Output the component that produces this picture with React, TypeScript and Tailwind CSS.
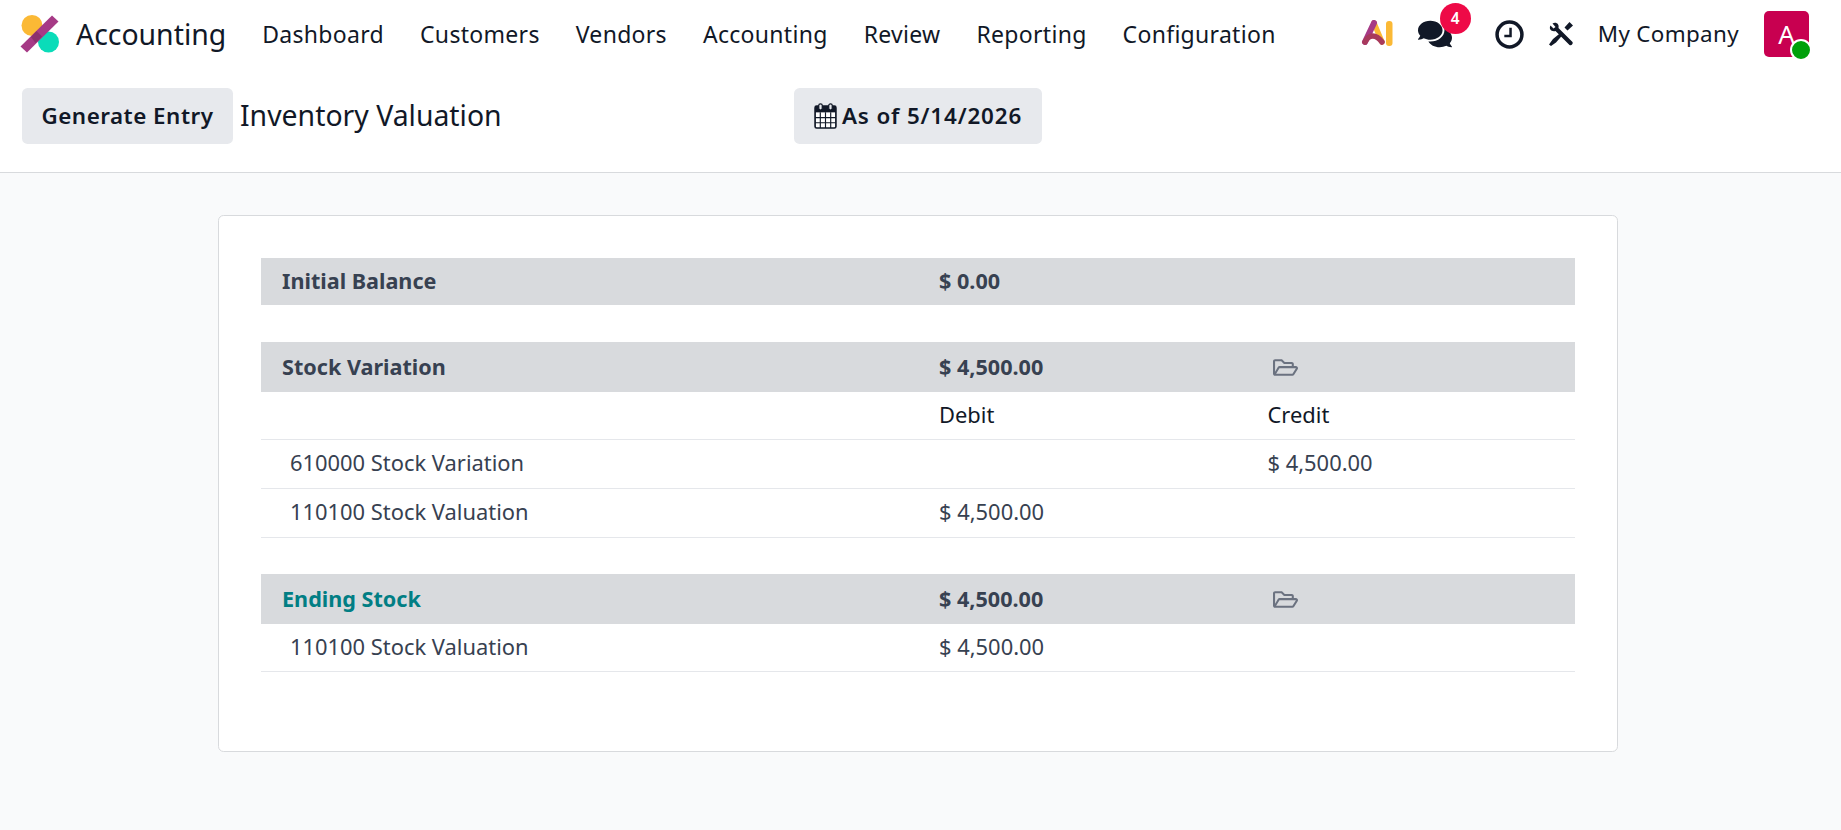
import { FaComments, FaRegFolderOpen } from "react-icons/fa";

const menuItems = ["Dashboard", "Customers", "Vendors", "Accounting", "Review", "Reporting", "Configuration"];

const AppLogo = () => (
  <svg width="40" height="40" viewBox="0 0 40 40" className="shrink-0">
    <circle cx="12" cy="11.5" r="10.5" fill="#fbb935" />
    <circle cx="28.5" cy="28" r="10.5" fill="#0adcb9" />
    <path d="M32 1.5 L38.5 7.5 L7 38.5 L0.5 32.5 Z" fill="#a63a86" />
    <path d="M16.5 17 L22 22.5 L15.5 29 L11 23 Z" fill="#7a2a5e" opacity="0.6" />
  </svg>
);

const AiIcon = () => (
  <svg width="32" height="28" viewBox="0 0 32 28">
    <path d="M13 3 L21 22" stroke="#fbb935" strokeWidth="5.5" strokeLinecap="round" />
    <path d="M13 3 L4 22" stroke="#a63a86" strokeWidth="6" strokeLinecap="round" />
    <path d="M4 22 C8 14 15 14 21 22" fill="none" stroke="#a83a5c" strokeWidth="5.5" strokeLinecap="round" />
    <rect x="25" y="1" width="6.5" height="25" rx="3" fill="#fbb935" />
  </svg>
);

const ClockIcon = () => (
  <svg width="29" height="29" viewBox="0 0 28 28">
    <circle cx="14" cy="14" r="12" fill="none" stroke="#111827" strokeWidth="3.4" />
    <path d="M15 7.5 V15.5 H9" fill="none" stroke="#111827" strokeWidth="2.4" />
  </svg>
);

const ToolsIcon = () => (
  <svg width="26" height="26" viewBox="0 0 26 26">
    <path d="M2.5 4.5 L5.5 7.5 L7.5 6 L4.5 2.5 C8 0.5 11.5 3 10.5 7 L24.5 21 C25.5 22.5 23.5 25 21.5 24 L7.5 10 C3.5 11 0.5 8 2.5 4.5 Z" fill="#111827" />
    <path d="M21.5 1 L25 4.5 L19.5 9.5 L16.5 6.5 Z M13 11.5 L15 13.5 L8 21.5 L3 25 L1 23.5 L5 18 Z" fill="#111827" />
  </svg>
);

const CalendarIcon = () => (
  <svg width="23" height="26" viewBox="0 0 22 25" className="shrink-0">
    <rect x="1" y="3" width="20" height="21" rx="1.5" fill="#fff" stroke="#111827" strokeWidth="1.6" />
    <rect x="1" y="3" width="20" height="6" fill="#111827" />
    <rect x="4.5" y="0.8" width="3.4" height="6" rx="1.7" fill="#e7e9ed" stroke="#111827" strokeWidth="1.2" />
    <rect x="14.1" y="0.8" width="3.4" height="6" rx="1.7" fill="#e7e9ed" stroke="#111827" strokeWidth="1.2" />
    <path d="M6 9 V24 M11 9 V24 M16 9 V24 M1 14 H21 M1 19 H21" stroke="#111827" strokeWidth="1.1" />
  </svg>
);

const SectionRow = ({ label, amount, folder, teal }: { label: string; amount: string; folder?: boolean; teal?: boolean }) => (
  <div className={`grid grid-cols-[2fr_1fr_1fr] items-center bg-[#d8dadd] text-[21.6px] font-bold text-[#374151] ${folder ? "h-[50px]" : "h-[47px]"}`}>
    <div className={`pl-[21px] ${teal ? "text-[#017e84]" : ""}`}>{label}</div>
    <div className="pl-[21px]">{amount}</div>
    <div className="pl-[26px]">{folder && <FaRegFolderOpen size={25} className="text-[#6b7280]" />}</div>
  </div>
);

const LineRow = ({ label, debit, credit, dark, height = "h-[49px]" }: { label?: string; debit?: string; credit?: string; dark?: boolean; height?: string }) => (
  <div className={`grid grid-cols-[2fr_1fr_1fr] items-center border-b border-[#e5e7eb] pb-[1px] text-[21.9px] ${height} ${dark ? "text-[#111827]" : "text-[#374151]"}`}>
    <div className="pl-[29px]">{label}</div>
    <div className="pl-[21px]">{debit}</div>
    <div className="pl-[21px]">{credit}</div>
  </div>
);

export default function App() {
  return (
    <div className="flex min-h-[830px] flex-col bg-[#f9fafb] font-['Noto_Sans',sans-serif] text-[22.4px] text-[#111827]">
      <div className="bg-white">
        {/* top bar */}
        <nav className="flex h-[68px] items-center pl-[20px] pr-[32px]">
          <AppLogo />
          <span className="ml-[16px] text-[28.4px]">Accounting</span>
          <div className="ml-[36px] flex gap-[36px] text-[23px]">
            {menuItems.map((item) => (
              <span key={item} className="tracking-[0.3px]">{item}</span>
            ))}
          </div>
          <div className="ml-auto flex items-center">
            <AiIcon />
            <div className="relative ml-[25px] mr-[43px]">
              <FaComments size={34} />
              <span className="absolute left-[22px] top-[-14px] flex h-[31px] w-[31px] items-center justify-center rounded-full bg-[#ee0a47] text-[15.4px] font-semibold text-white">4</span>
            </div>
            <ClockIcon />
            <div className="ml-[24px]">
              <ToolsIcon />
            </div>
            <span className="ml-[24px] tracking-[0.35px]">My Company</span>
            <div className="relative ml-[25px] flex h-[46px] w-[45px] items-center justify-center rounded-[5px] bg-[#c80050] text-[26px] text-white">
              A
              <span className="absolute bottom-[-4px] right-[-3px] h-[22px] w-[22px] rounded-full border-2 border-white bg-[#00a00a]" />
            </div>
          </div>
        </nav>
        {/* control panel */}
        <div className="flex h-[105px] border-b border-[#d8dadd] pl-[22px] pt-[20px]">
          <button className="h-[56px] w-[211px] rounded-[5.6px] bg-[#e7e9ed] font-semibold tracking-[0.5px]">Generate Entry</button>
          <span className="ml-[7px] mt-[-1px] flex h-[56px] w-[554px] items-center text-[28.4px]">Inventory Valuation</span>
          <button className="flex h-[56px] w-[248px] items-center justify-center gap-[5px] rounded-[5.6px] bg-[#e7e9ed] font-semibold tracking-[0.85px]">
            <CalendarIcon />
            As of 5/14/2026
          </button>
        </div>
      </div>
      {/* report */}
      <div className="flex flex-1 justify-center pr-[5px] pt-[42px]">
        <div className="h-[537px] w-[1400px] rounded-[5.6px] border border-[#d8dadd] bg-white px-[42px] pt-[42px]">
          <SectionRow label="Initial Balance" amount="$ 0.00" />
          <div className="h-[37px]" />
          <SectionRow label="Stock Variation" amount="$ 4,500.00" folder />
          <LineRow debit="Debit" credit="Credit" dark height="h-[48px]" />
          <LineRow label="610000 Stock Variation" credit="$ 4,500.00" />
          <LineRow label="110100 Stock Valuation" debit="$ 4,500.00" />
          <div className="h-[36px]" />
          <SectionRow label="Ending Stock" amount="$ 4,500.00" folder teal />
          <LineRow label="110100 Stock Valuation" debit="$ 4,500.00" height="h-[48px]" />
        </div>
      </div>
    </div>
  );
}
